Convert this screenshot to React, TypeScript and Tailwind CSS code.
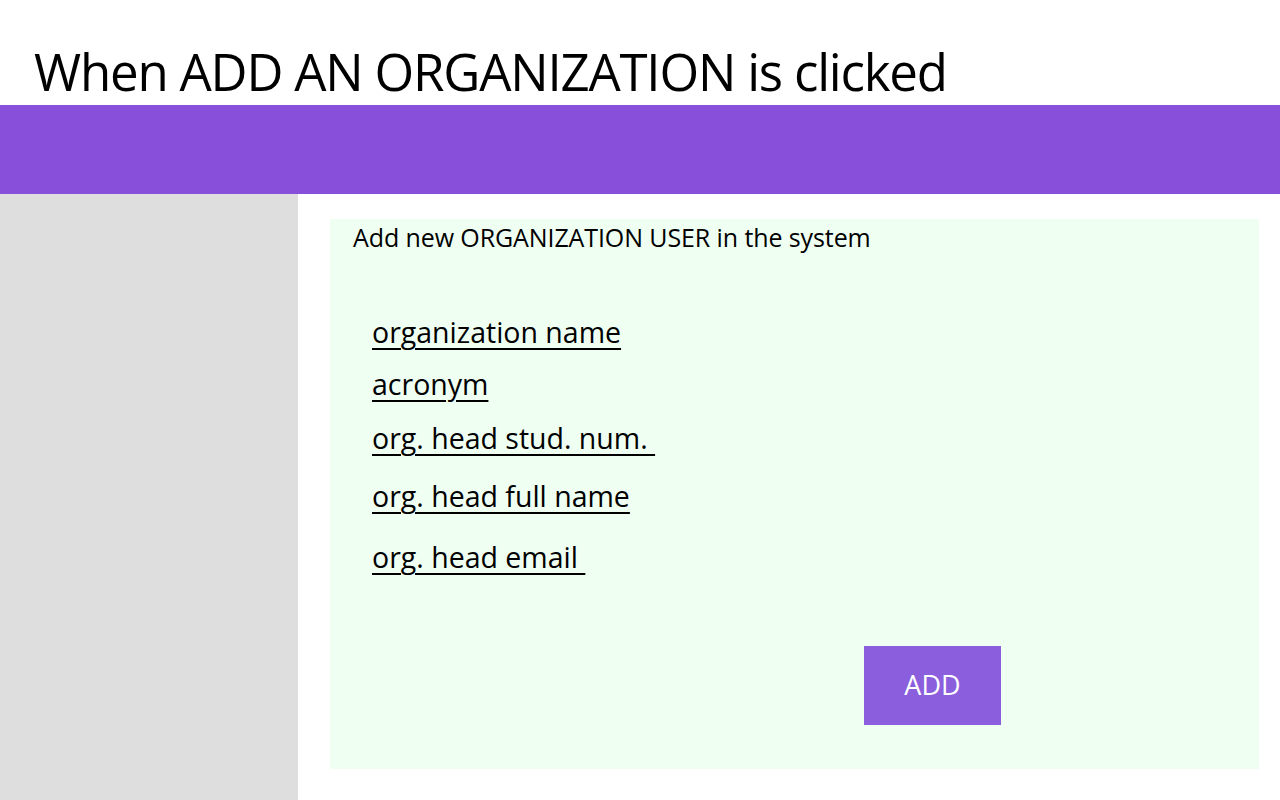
export default function App() {
  const fields = [
    { label: "organization name", mt: "mt-[67px]" },
    { label: "acronym", mt: "mt-[21px]" },
    { label: "org. head stud. num. ", mt: "mt-[23px]" },
    { label: "org. head full name", mt: "mt-[27px]" },
    { label: "org. head email ", mt: "mt-[30px]" },
  ];
  return (
    <div
      className="w-[1280px] h-[800px] bg-white flex flex-col overflow-hidden text-black"
      style={{ fontFamily: "'Open Sans', 'Noto Sans', sans-serif" }}
    >
      <div className="h-[105px] px-[34px] flex items-end">
        <h1 className="text-[51px] leading-[51px] pb-[8px] tracking-[-1.2px] whitespace-pre">When ADD AN ORGANIZATION is clicked</h1>
      </div>
      <div className="h-[89px] bg-[#8850da]" />
      <div className="flex flex-1">
        <div className="w-[298px] bg-[#dedede]" />
        <div className="flex-1 pt-[25px] pl-[32px] pr-[21px] pb-[31px]">
          <div className="h-full bg-[#effff2] flex flex-col">
            <p className="pl-[23px] pt-[5px] text-[25px] leading-[26px] tracking-[-0.1px] whitespace-pre">Add new ORGANIZATION USER in the system</p>
            <div className="pl-[42px] flex flex-col items-start">
              {fields.map((f) => (
                <span
                  key={f.label}
                  className={`${f.mt} text-[28.5px] leading-[31px] underline underline-offset-[5px] decoration-[1.5px] whitespace-pre`}
                >
                  {f.label}
                </span>
              ))}
            </div>
            <div className="ml-[534px] mt-[73px] w-[137px] h-[79px] bg-[#8a5edd] flex items-center justify-center text-white text-[27px]">
              ADD
            </div>
          </div>
        </div>
      </div>
    </div>
  );
}
